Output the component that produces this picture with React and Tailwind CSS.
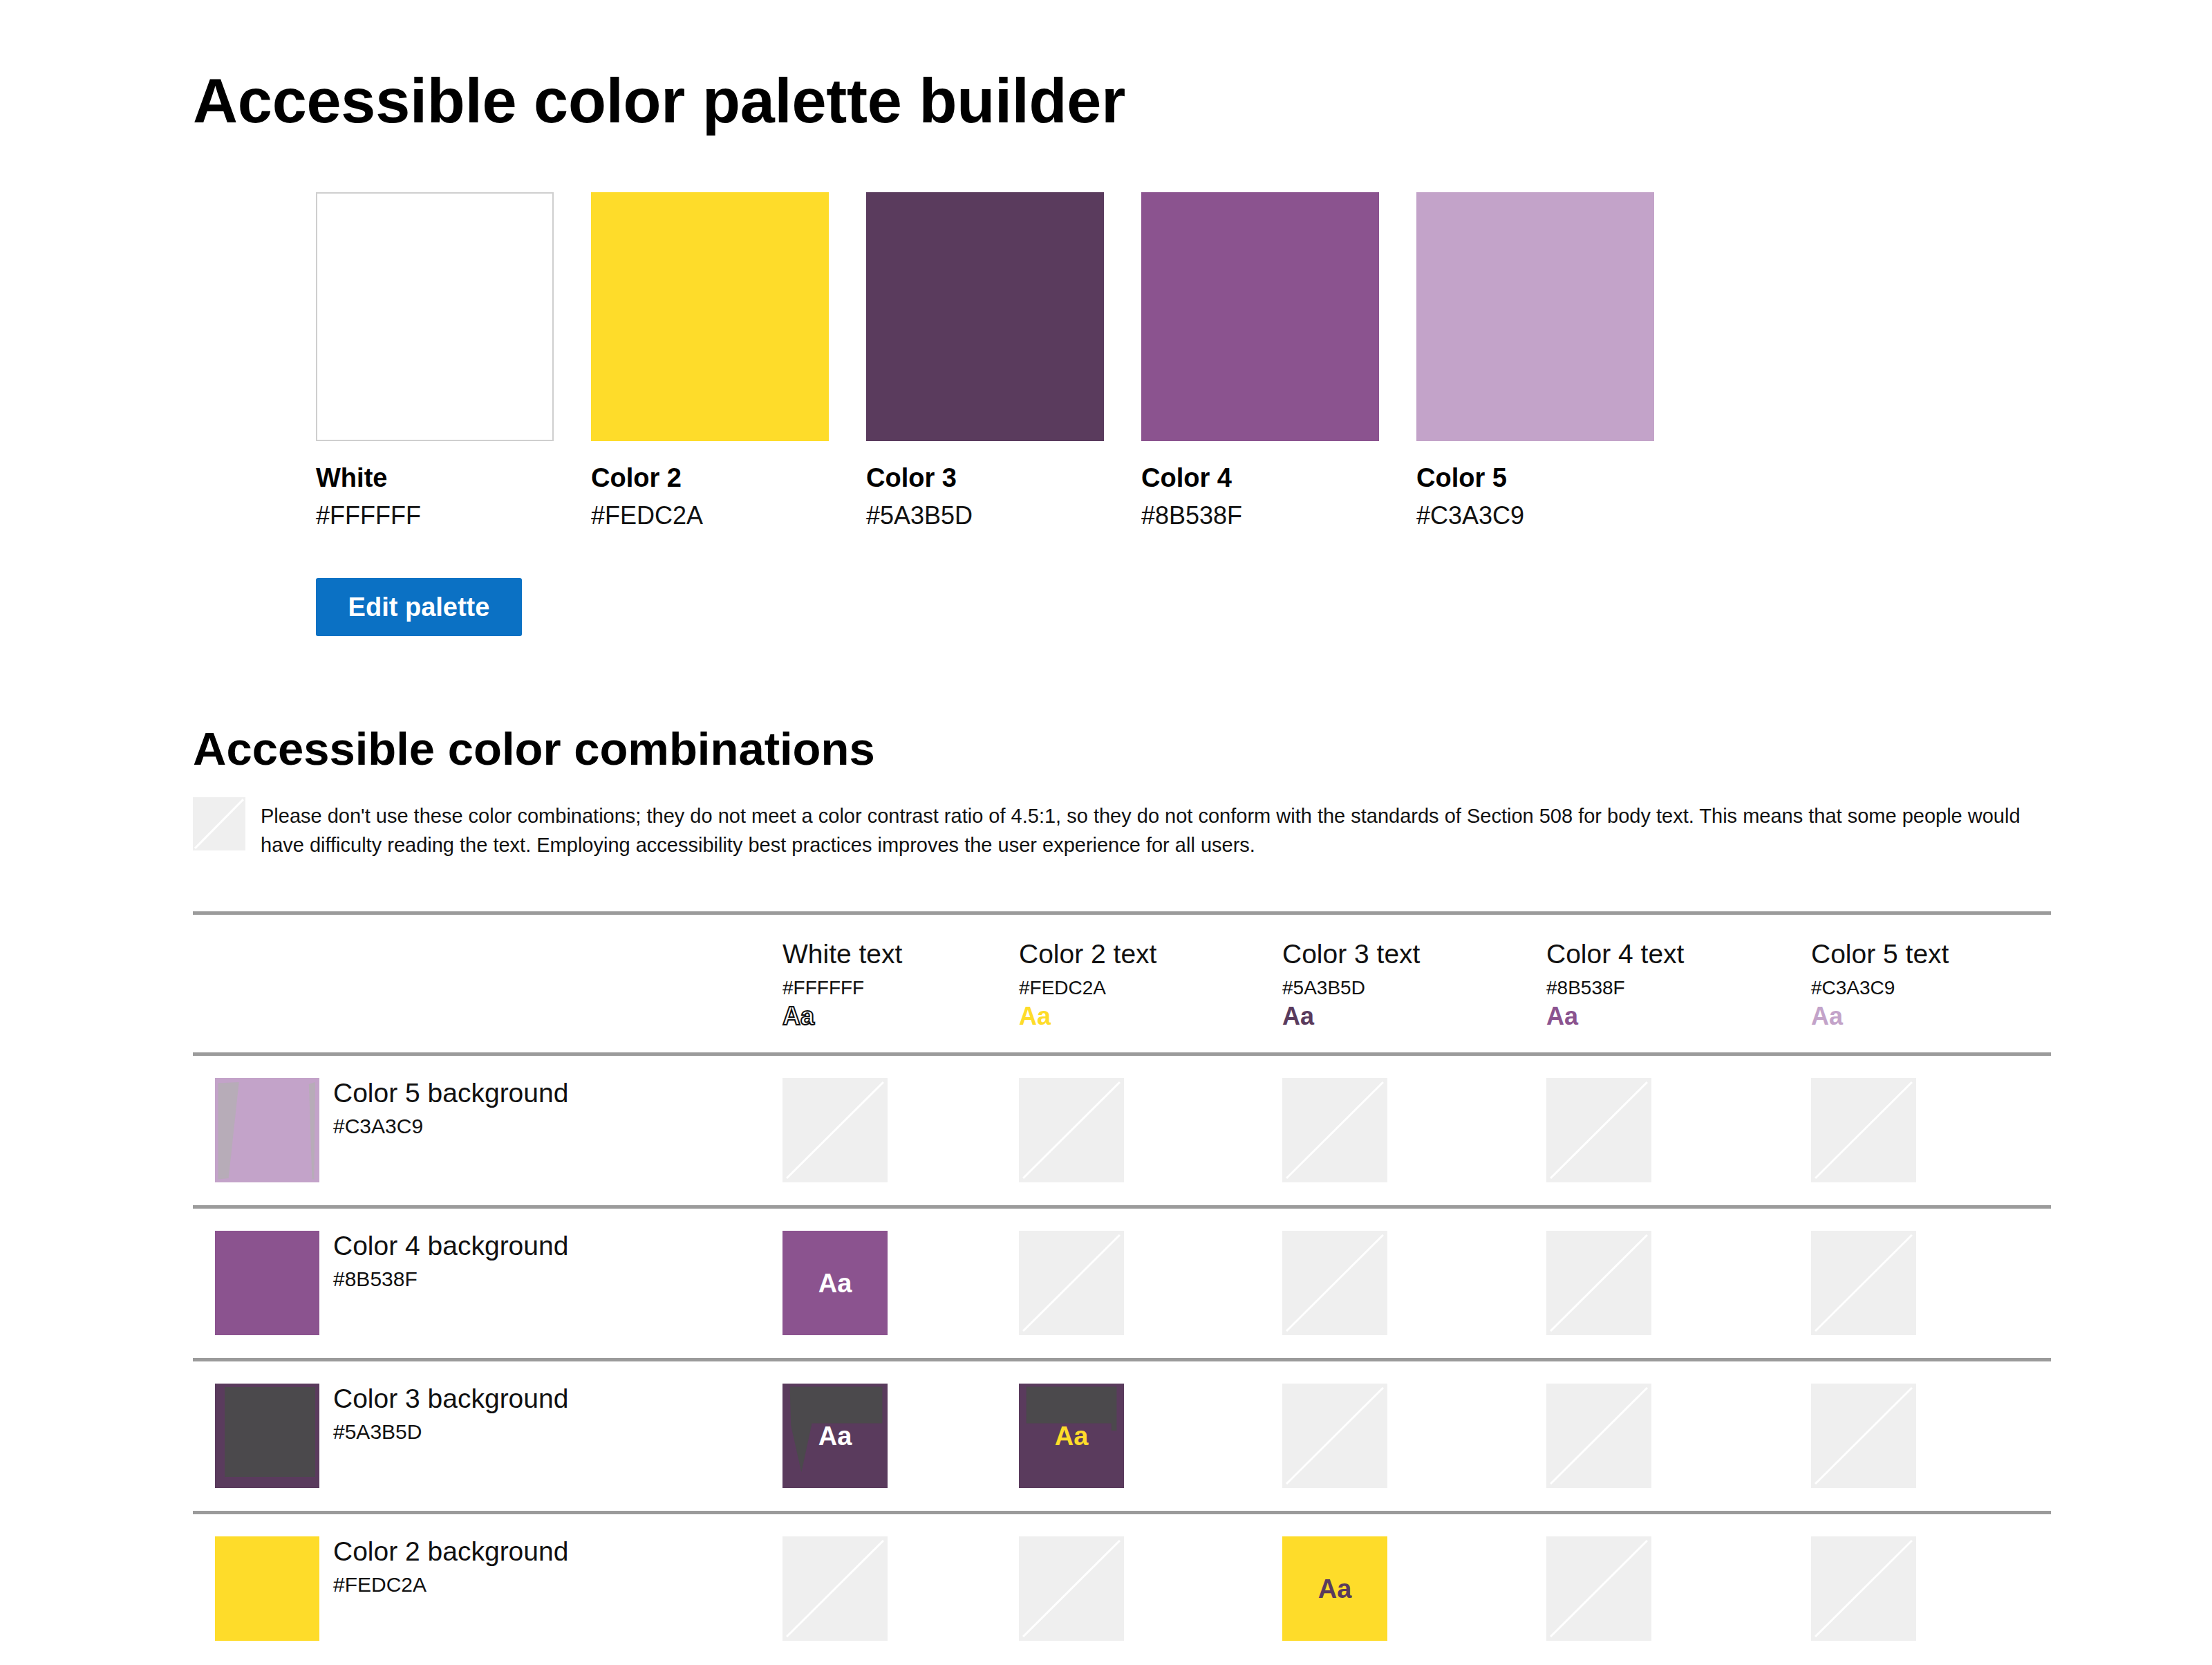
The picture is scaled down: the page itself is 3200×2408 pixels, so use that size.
import React from 'react';

const palette = [
  { name: 'White', hex: '#FFFFFF', swatch: 'bg-white border-2 border-[#cfcfcf]' },
  { name: 'Color 2', hex: '#FEDC2A', swatch: 'bg-[#FEDC2A]' },
  { name: 'Color 3', hex: '#5A3B5D', swatch: 'bg-[#5A3B5D]' },
  { name: 'Color 4', hex: '#8B538F', swatch: 'bg-[#8B538F]' },
  { name: 'Color 5', hex: '#C3A3C9', swatch: 'bg-[#C3A3C9]' },
];

const textCols = [
  { name: 'White text', hex: '#FFFFFF', aa: 'text-white [-webkit-text-stroke:2px_#111]' },
  { name: 'Color 2 text', hex: '#FEDC2A', aa: 'text-[#FEDC2A]' },
  { name: 'Color 3 text', hex: '#5A3B5D', aa: 'text-[#5A3B5D]' },
  { name: 'Color 4 text', hex: '#8B538F', aa: 'text-[#8B538F]' },
  { name: 'Color 5 text', hex: '#C3A3C9', aa: 'text-[#C3A3C9]' },
];

// null = combination fails contrast
const rows = [
  {
    label: 'Color 5 background', hex: '#C3A3C9', swatch: 'bg-[#C3A3C9]', glitch: 'c5',
    cells: [null, null, null, null, null],
  },
  {
    label: 'Color 4 background', hex: '#8B538F', swatch: 'bg-[#8B538F]',
    cells: [{ bg: 'bg-[#8B538F]', fg: 'text-white' }, null, null, null, null],
  },
  {
    label: 'Color 3 background', hex: '#5A3B5D', swatch: 'bg-[#5A3B5D]', glitch: 'c3',
    cells: [
      { bg: 'bg-[#5A3B5D]', fg: 'text-white', glitch: 'a' },
      { bg: 'bg-[#5A3B5D]', fg: 'text-[#FEDC2A]', glitch: 'b' },
      null, null, null,
    ],
  },
  {
    label: 'Color 2 background', hex: '#FEDC2A', swatch: 'bg-[#FEDC2A]',
    cells: [null, null, { bg: 'bg-[#FEDC2A]', fg: 'text-[#5A3B5D]' }, null, null],
  },
];

const grid = 'grid grid-cols-[853px_342px_381px_382px_383px_1fr]';

function Blocked({ size }) {
  return (
    <div className={'relative bg-[#efefef] ' + size}>
      <svg className="absolute inset-0 h-full w-full" viewBox="0 0 100 100" preserveAspectRatio="none">
        <line x1="4" y1="96" x2="96" y2="4" stroke="#ffffff" strokeWidth="3" vectorEffect="non-scaling-stroke" />
      </svg>
    </div>
  );
}

function Swatch({ row }) {
  return (
    <div className={'relative h-[151px] w-[151px] shrink-0 ' + row.swatch}>
      {row.glitch === 'c5' && (
        <>
          <div className="absolute inset-0 bg-[#b7acb8] [clip-path:polygon(3%_5%,23%_4%,13%_96%,3%_97%)]" />
          <div className="absolute inset-0 bg-[#b7acb8] [clip-path:polygon(90%_6%,96%_4%,95%_97%,93%_97%)]" />
        </>
      )}
      {row.glitch === 'c3' && (
        <div className="absolute left-[14px] right-[6px] top-[5px] bottom-[16px] bg-[#4b494c]" />
      )}
    </div>
  );
}

function Pass({ cell }) {
  return (
    <div className={'relative flex h-[151px] w-[152px] items-center justify-center ' + cell.bg}>
      {cell.glitch === 'a' && (
        <div className="absolute inset-0 bg-[#4b494c] [clip-path:polygon(7%_3%,95%_3%,95%_38%,28%_38%,18%_85%,8%_40%)]" />
      )}
      {cell.glitch === 'b' && (
        <div className="absolute inset-0 bg-[#4b494c] [clip-path:polygon(7%_3%,93%_3%,93%_45%,88%_45%,88%_38%,7%_38%)]" />
      )}
      <span className={'relative text-[38px] font-bold leading-none ' + cell.fg}>Aa</span>
    </div>
  );
}

export default function App() {
  return (
    <div className="min-h-screen bg-white pl-[279px] pt-[101px] font-['Liberation_Sans',Arial,sans-serif] text-[#111]">
      <h1 className="text-[90px] font-bold leading-none tracking-[-0.2px] text-black">
        Accessible color palette builder
      </h1>

      <div className="ml-[178px] mt-[87px] flex gap-[54px]">
        {palette.map((p) => (
          <div key={p.hex} className="w-[344px]">
            <div className={'h-[360px] w-full ' + p.swatch} />
            <p className="mt-[30px] text-[38px] font-bold leading-[46px] text-black">{p.name}</p>
            <p className="mt-[9px] text-[36px] leading-[46px]">{p.hex}</p>
          </div>
        ))}
      </div>

      <button className="ml-[178px] mt-[67px] flex h-[84px] w-[298px] items-center justify-center rounded-[3px] bg-[#0b71c4] text-[38px] font-bold text-white">
        Edit palette
      </button>

      <h2 className="mt-[129px] text-[67px] font-bold leading-none text-black">
        Accessible color combinations
      </h2>

      <div className="mt-[37px] flex gap-[22px]">
        <Blocked size="h-[77px] w-[76px] shrink-0" />
        <p className="pt-[6px] text-[29px] leading-[42px] text-[#111]">
          <span className="block whitespace-nowrap">
            Please don't use these color combinations; they do not meet a color contrast ratio of 4.5:1, so they do not conform with the standards of Section 508 for body text. This means that some people would
          </span>
          <span className="block whitespace-nowrap">
            have difficulty reading the text. Employing accessibility best practices improves the user experience for all users.
          </span>
        </p>
      </div>

      <div className="mt-[75px] w-[2688px]">
        <div className={grid + ' border-y-[5px] border-[#9b9b9b]'}>
          <div />
          {textCols.map((c) => (
            <div key={c.name} className="pb-[32px] pt-[35px]">
              <p className="text-[39px] leading-[44px]">{c.name}</p>
              <p className="mt-[12px] text-[28px] leading-[30px]">{c.hex}</p>
              <p className={'mt-[6px] text-[36px] font-bold leading-[40px] ' + c.aa}>Aa</p>
            </div>
          ))}
        </div>

        {rows.map((r, i) => (
          <div
            key={r.label}
            className={grid + ' pb-[33px] pt-[32px] ' + (i < rows.length - 1 ? 'border-b-[5px] border-[#9b9b9b]' : '')}
          >
            <div className="flex gap-[20px] pl-[32px]">
              <Swatch row={r} />
              <div>
                <p className="text-[39px] leading-[44px]">{r.label}</p>
                <p className="mt-[10px] text-[30px] leading-[32px]">{r.hex}</p>
              </div>
            </div>
            {r.cells.map((cell, j) => (
              <div key={j}>
                {cell ? <Pass cell={cell} /> : <Blocked size="h-[151px] w-[152px]" />}
              </div>
            ))}
          </div>
        ))}
      </div>
    </div>
  );
}
